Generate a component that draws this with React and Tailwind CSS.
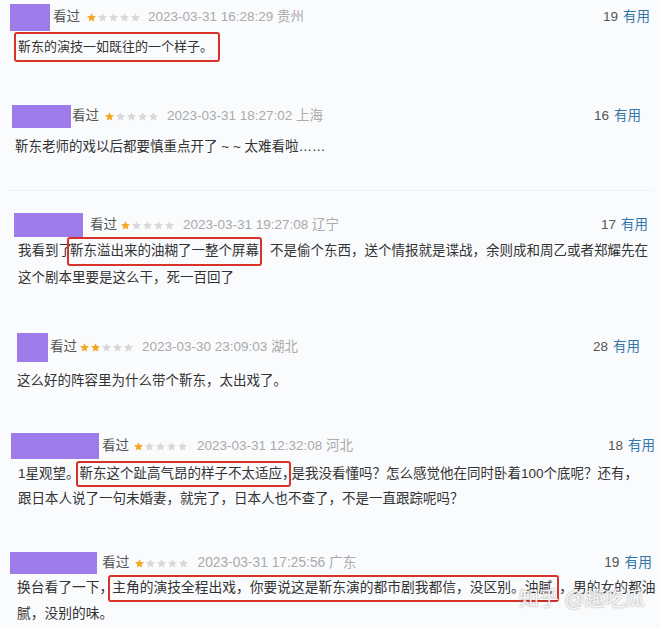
const Star = ({ on }) => (
  <svg width="11" height="11" viewBox="0 0 24 24" className="shrink-0">
    <path
      d="M12 2.5l2.9 6.3 6.9.7-5.2 4.6 1.5 6.8L12 17.4l-6.1 3.5 1.5-6.8L2.2 9.5l6.9-.7z"
      fill={on ? '#f5a623' : '#d8d8d8'}
    />
  </svg>
);

const Header = ({ box, look, stars, dateGap, date, rating, count, pad }) => (
  <div className={`flex items-center ${pad}`}>
    <div className={`shrink-0 bg-[#9d7ce9] ${box}`} />
    <span className={`text-[#555] ${look}`}>看过</span>
    <span className={`flex ${stars}`}>
      {[1, 2, 3, 4, 5].map((n) => (
        <Star key={n} on={n <= rating} />
      ))}
    </span>
    <span className={`text-[#aaa] ${dateGap}`}>{date}</span>
    <span className="flex-1" />
    <span className="text-[#555]">{count}</span>
    <span className="ml-[5px] text-[#3377aa]">有用</span>
  </div>
);

const Mark = ({ children, cls }) => (
  <span className={`flex items-center rounded-[3px] border-2 border-[#d8322c] ${cls}`}>{children}</span>
);

export default function App() {
  return (
    <div
      className="relative h-[628px] w-[660px] overflow-hidden bg-[#fafbfd] text-[13.5px] text-[#333]"
      style={{ fontFamily: '"Liberation Sans", "Noto Sans CJK SC", sans-serif' }}
    >
      {/* 1 */}
      <section className="pt-[4px]">
        <Header
          pad="pl-[10px] pr-[10px]"
          box="h-[27px] w-[40px]"
          look="ml-[3px]"
          stars="ml-[6px]"
          dateGap="ml-[7px]"
          date="2023-03-31 16:28:29 贵州"
          rating={1}
          count="19"
        />
        <div className="mt-[1px] flex h-[30px] items-center pl-[14px] text-[13px]">
          <Mark cls="h-[30px] w-[206px] pl-[2px]">靳东的演技一如既往的一个样子。</Mark>
        </div>
      </section>

      {/* 2 */}
      <section className="mt-[43px]">
        <Header
          pad="pl-[12px] pr-[19px]"
          box="h-[23px] w-[59px]"
          look="ml-[1px]"
          stars="ml-[5px]"
          dateGap="ml-[8px]"
          date="2023-03-31 18:27:02 上海"
          rating={1}
          count="16"
        />
        <div className="mt-[6px] flex h-[26px] items-center whitespace-nowrap pl-[15px]">
          靳东老师的戏以后都要慎重点开了 ~ ~ 太难看啦……
        </div>
      </section>

      <div className="mx-[8px] mt-[30px] h-px bg-[#edf0f4]" />

      {/* 3 */}
      <section className="mt-[22px]">
        <Header
          pad="pl-[14px] pr-[12px]"
          box="h-[24px] w-[69px]"
          look="ml-[7px]"
          stars="ml-[3px]"
          dateGap="ml-[8px]"
          date="2023-03-31 19:27:08 辽宁"
          rating={1}
          count="17"
        />
        <div className="mt-[1px] flex h-[27px] items-center whitespace-nowrap pl-[18px]">
          <span>我看到了</span>
          <Mark cls="-ml-[5px] h-[29px] px-[1px]">靳东溢出来的油糊了一整个屏幕</Mark>
          <span className="ml-[8px]">不是偷个东西，送个情报就是谍战，余则成和周乙或者郑耀先在</span>
        </div>
        <div className="flex h-[27px] items-center whitespace-nowrap pl-[18px]">这个剧本里要是这么干，死一百回了</div>
      </section>

      {/* 4 */}
      <section className="mt-[41px]">
        <Header
          pad="pl-[17px] pr-[20px]"
          box="h-[29px] w-[31px]"
          look="ml-[2px]"
          stars="ml-[2px]"
          dateGap="ml-[8px]"
          date="2023-03-30 23:09:03 湖北"
          rating={2}
          count="28"
        />
        <div className="mt-[6px] flex h-[26px] items-center whitespace-nowrap pl-[17px]">
          这么好的阵容里为什么带个靳东，太出戏了。
        </div>
      </section>

      {/* 5 */}
      <section className="mt-[39px]">
        <Header
          pad="pl-[11px] pr-[5px]"
          box="h-[26px] w-[88px]"
          look="ml-[3px]"
          stars="ml-[4px]"
          dateGap="ml-[9px]"
          date="2023-03-31 12:32:08 河北"
          rating={1}
          count="18"
        />
        <div className="mt-[2px] flex h-[26px] items-center whitespace-nowrap pl-[18px]">
          <span>1星观望。</span>
          <Mark cls="-ml-[4px] h-[26px] w-[215px] pl-[2px]">靳东这个趾高气昂的样子不太适应，</Mark>
          <span className="ml-[1px]">是我没看懂吗？怎么感觉他在同时卧着100个底呢？还有，</span>
        </div>
        <div className="flex h-[24px] items-center whitespace-nowrap pl-[18px]">
          跟日本人说了一句未婚妻，就完了，日本人也不查了，不是一直跟踪呢吗？
        </div>
      </section>

      {/* 6 */}
      <section className="mt-[41px] text-[13.75px]">
        <Header
          pad="pl-[10px] pr-[8px]"
          box="h-[22px] w-[87px]"
          look="ml-[5px]"
          stars="ml-[4px]"
          dateGap="ml-[9px]"
          date="2023-03-31 17:25:56 广东"
          rating={1}
          count="19"
        />
        <div className="mt-[1px] flex h-[26px] items-center whitespace-nowrap pl-[17px]">
          <span>换台看了一下，</span>
          <Mark cls="-ml-[5px] h-[27px] w-[451px] pl-[2px]">主角的演技全程出戏，你要说这是靳东演的都市剧我都信，没区别。油腻</Mark>
          <span>，男的女的都油</span>
        </div>
        <div className="flex h-[26px] items-center whitespace-nowrap pl-[17px]">腻，没别的味。</div>
      </section>

      <div className="absolute left-[519px] top-[584px] text-[20px] text-white/90 [text-shadow:0_0_2px_rgba(0,0,0,0.45)]">
        知乎 @趣吃瓜
      </div>
    </div>
  );
}
